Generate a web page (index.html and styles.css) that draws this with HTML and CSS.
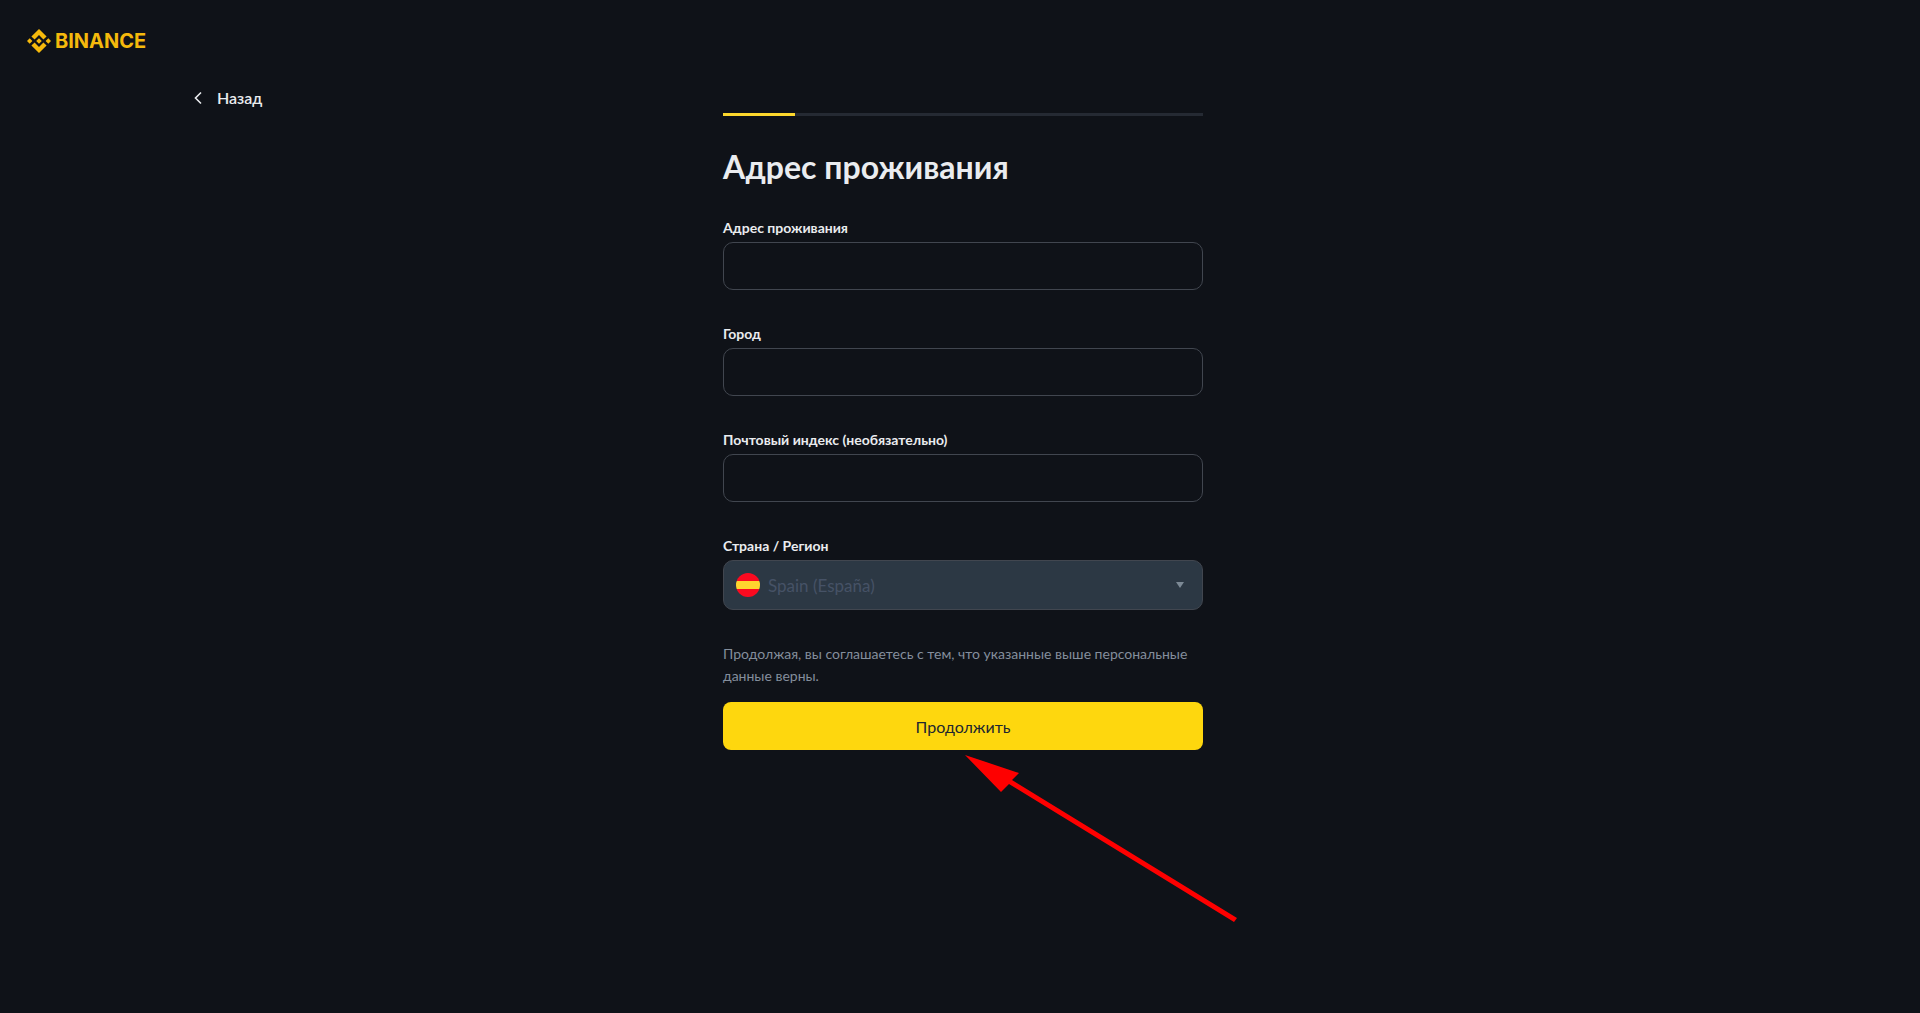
FILE: index.html
```
<!doctype html>
<html lang="ru">

<head>
    <meta charset="UTF-8">
    <meta name="viewport" content="width=device-width, initial-scale=1.0">
    <title>Адрес проживания</title>
    <link rel="stylesheet" href="styles.css">
</head>

<body>
    <header class="header">
        <a class="logo" href="#">
            <svg class="logo-icon" viewBox="0 0 24 24" aria-hidden="true">
                <path d="M7.6 10.4 12 6l4.4 4.4 3.2-3L12 0 4.4 7.4zM0 12l2.7-2.7L5.4 12l-2.7 2.7zM7.6 13.6 12 18l4.4-4.4 3.2 3L12 24l-7.6-7.4zM18.6 12l2.7-2.7L24 12l-2.7 2.7zM9.2 12 12 9.2l2.8 2.8-2.8 2.8z" />
            </svg>
            <span>BINANCE</span>
        </a>
    </header>

    <main class="page">
        <a class="back" href="#">
            <svg class="back-icon" viewBox="0 0 8 14" aria-hidden="true">
                <path d="M7 1.5 1.5 7 7 12.5" />
            </svg>
            Назад
        </a>

        <section class="content">
            <div class="progress">
                <div class="progress-bar"></div>
            </div>

            <h1 class="title">Адрес проживания</h1>

            <form class="form">
                <div class="field">
                    <label for="address">Адрес проживания</label>
                    <input class="control" type="text" id="address">
                </div>
                <div class="field">
                    <label for="city">Город</label>
                    <input class="control" type="text" id="city">
                </div>
                <div class="field">
                    <label for="postcode">Почтовый индекс (необязательно)</label>
                    <input class="control" type="text" id="postcode">
                </div>
                <div class="field">
                    <label for="country">Страна / Регион</label>
                    <div class="select-wrap">
                        <select class="control country" id="country" disabled>
                            <option>Spain (España)</option>
                        </select>
                        <span class="flag"></span>
                        <span class="caret"></span>
                    </div>
                </div>

                <p class="note">Продолжая, вы соглашаетесь с тем, что указанные выше персональные данные верны.</p>

                <div class="submit-wrap">
                    <button class="submit" type="button">Продолжить</button>
                    <!-- стрелка-подсказка к кнопке -->
                    <svg class="pointer" viewBox="0 0 274 170" aria-hidden="true">
                        <path d="M0 0 54 18l-7 7L272 163l-3 4L44 29l-8 8z" />
                    </svg>
                </div>
            </form>
        </section>
    </main>
</body>

</html>
```
FILE: styles.css
```
* {
    box-sizing: border-box;
    margin: 0;
    padding: 0;
}

body {
    min-height: 100vh;
    background: #0f1218;
    color: #eaecef;
    font-family: Lato, "Noto Sans", sans-serif;
    font-size: 16px;
    line-height: 24px;
}

.header {
    display: flex;
    align-items: center;
    height: 82px;
    padding: 0 27px;
}

.logo {
    display: flex;
    align-items: center;
    gap: 4px;
    color: #f5b90c;
    font-family: Inter, sans-serif;
    font-size: 20px;
    font-weight: 700;
    text-decoration: none;
}

.logo-icon {
    width: 24px;
    height: 24px;
    fill: #f5b90c;
}

.page {
    display: grid;
    grid-template-columns: 1fr minmax(0, 480px) 1fr;
    padding: 4px 188px 200px 194px;
}

.back {
    display: flex;
    align-items: center;
    justify-self: start;
    align-self: start;
    gap: 15px;
    color: #eaecef;
    font-weight: 600;
    text-decoration: none;
}

.back-icon {
    width: 8px;
    height: 14px;
    fill: none;
    stroke: #eaecef;
    stroke-width: 1.6;
}

.content {
    padding-top: 27px;
}

.progress {
    height: 3px;
    background: #252a33;
}

.progress-bar {
    width: 15%;
    height: 100%;
    background: #fcd72d;
}

.title {
    margin: 31px 0 28px;
    font-size: 32px;
    font-weight: 700;
    line-height: 40px;
}

.field {
    margin-bottom: 31px;
}

.field label {
    display: block;
    padding-top: 2px;
    margin-bottom: 3px;
    font-size: 14px;
    font-weight: 700;
    line-height: 22px;
}

.control {
    display: block;
    width: 100%;
    height: 48px;
    padding: 0 12px;
    border: 1px solid #41464f;
    border-radius: 10px;
    outline: none;
    background: transparent;
    color: #eaecef;
    font: inherit;
}

.select-wrap {
    position: relative;
}

.country {
    height: 50px;
    padding: 2px 44px 0;
    background: #2c3844;
    color: #465266;
    font-size: 17px;
    opacity: 1;
    appearance: none;
}

.flag {
    position: absolute;
    top: 13px;
    left: 13px;
    width: 24px;
    height: 24px;
    border-radius: 50%;
    background: linear-gradient(#fb0a20 8px, #ffd52e 8px, #ffd52e 16px, #fb0a20 16px);
}

.caret {
    position: absolute;
    top: 22px;
    right: 19px;
    border: 4px solid transparent;
    border-top: 6px solid #7c8995;
    border-bottom: 0;
}

.note {
    padding-top: 2px;
    margin-bottom: 15px;
    color: #848e9c;
    font-size: 14px;
    line-height: 22px;
}

.submit-wrap {
    position: relative;
}

.submit {
    width: 100%;
    height: 48px;
    padding-top: 2px;
    border: 0;
    border-radius: 8px;
    background: #fed70e;
    color: #202630;
    font: inherit;
    cursor: pointer;
}

.pointer {
    position: absolute;
    top: 53px;
    left: 50%;
    width: 274px;
    height: 170px;
    margin-left: 2px;
    fill: #fe0000;
    pointer-events: none;
}
```
